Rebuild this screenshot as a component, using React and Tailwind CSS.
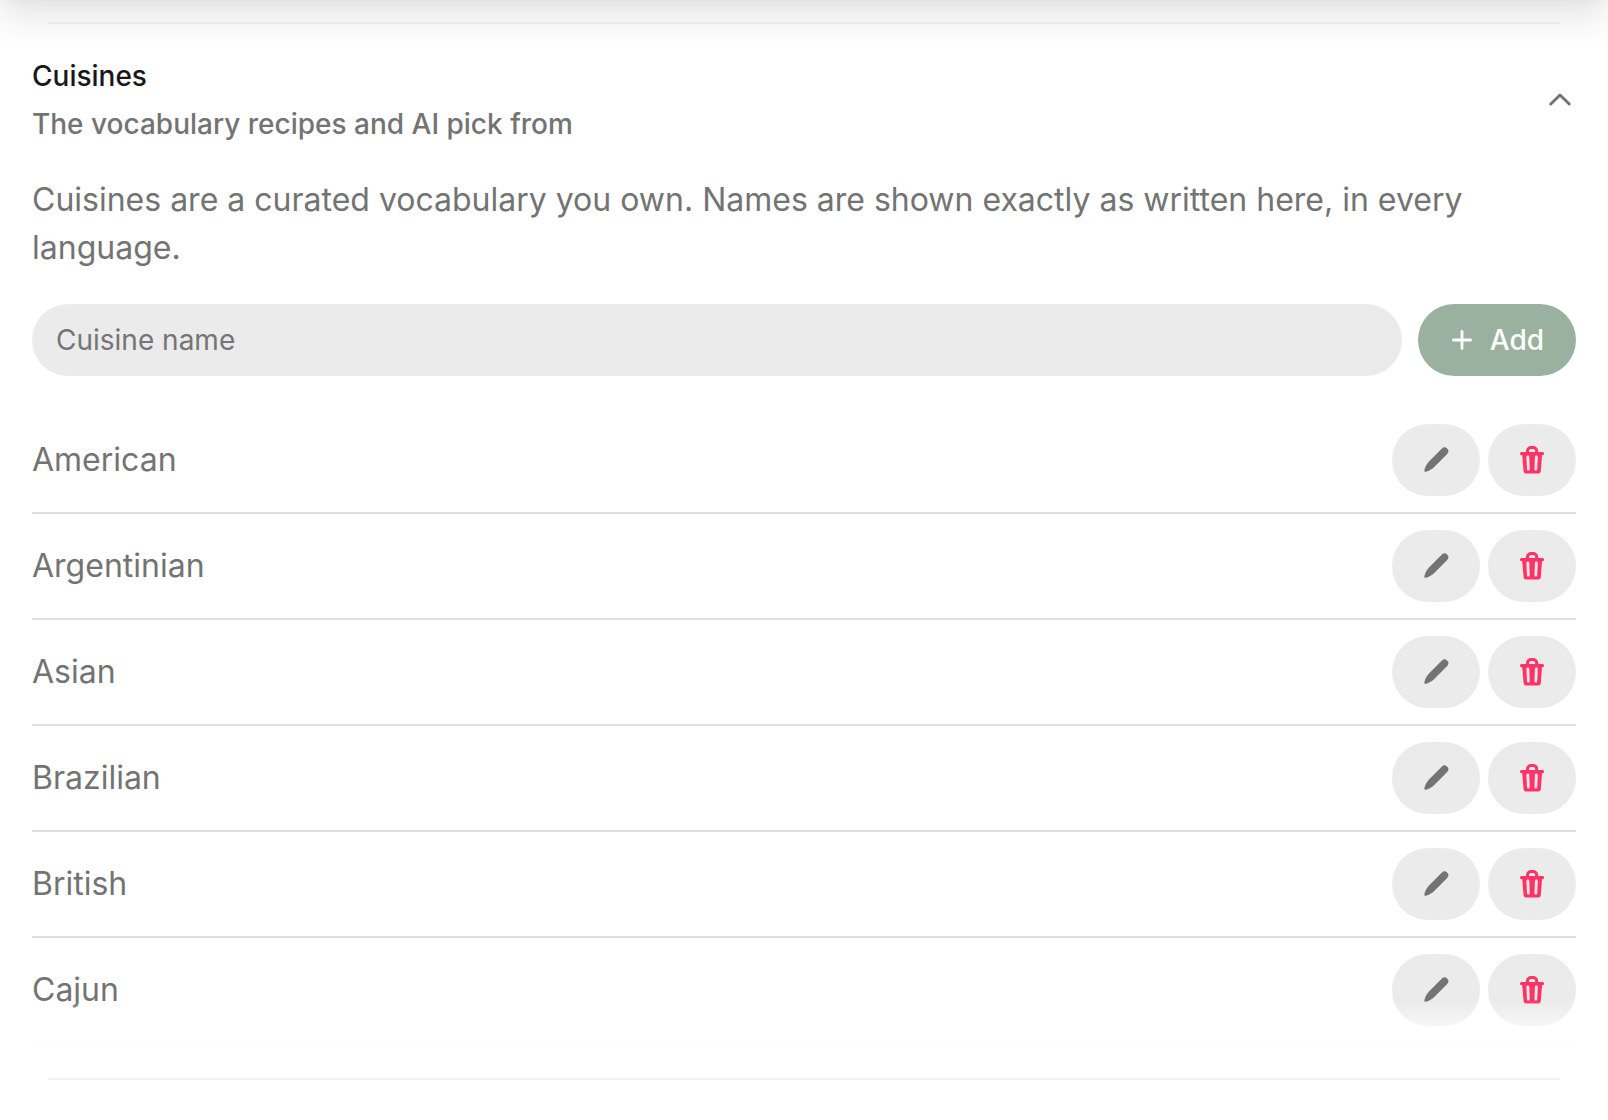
import { useState } from 'react';

const initialCuisines = ['American', 'Argentinian', 'Asian', 'Brazilian', 'British', 'Cajun'];

function ChevronUpIcon() {
  return (
    <svg width="32" height="32" viewBox="0 0 32 32" fill="none" stroke="currentColor" strokeWidth="3" strokeLinecap="round" strokeLinejoin="round" aria-hidden="true">
      <path d="M6.8 20 L16 11 L25.2 20" />
    </svg>
  );
}

function PlusIcon() {
  return (
    <svg width="24" height="24" viewBox="0 0 24 24" fill="none" stroke="currentColor" strokeWidth="2.8" strokeLinecap="round" aria-hidden="true">
      <path d="M12 3.4 V20.6 M3.4 12 H20.6" />
    </svg>
  );
}

function PencilIcon() {
  return (
    <svg width="32" height="32" viewBox="0 0 32 32" fill="currentColor" aria-hidden="true">
      <path d="M21.7 4.7 L9 17.4 C6.6 19.8 5.2 22.8 4.4 26 C4.1 27.3 4.8 28 6 27.7 C9.2 26.9 12.1 25.1 14.5 22.7 L27.2 10 A3.75 3.75 0 0 0 21.7 4.7 Z" />
    </svg>
  );
}

function TrashIcon() {
  return (
    <svg width="32" height="32" viewBox="0 0 32 32" fill="currentColor" fillRule="evenodd" aria-hidden="true">
      <path d="M10 8 V7 A5 5 0 0 1 15 2 H17.2 A5 5 0 0 1 22.2 7 V8 H26.5 A1.6 1.6 0 0 1 26.5 11.2 H26 L24.8 27.2 A2.6 2.6 0 0 1 22.2 29.6 H10.2 A2.6 2.6 0 0 1 7.6 27.2 L6.2 11.2 H5.5 A1.6 1.6 0 0 1 5.5 8 Z M13 8 H19.2 V7 A2 2 0 0 0 17.2 5 H15 A2 2 0 0 0 13 7 Z M10.4 13 L11 25.2 A1.3 1.3 0 0 0 13.7 25 L13.3 12.9 A1.45 1.45 0 0 0 10.4 13 Z M21.8 13 L21.2 25.2 A1.3 1.3 0 0 1 18.5 25 L18.9 12.9 A1.45 1.45 0 0 1 21.8 13 Z" />
    </svg>
  );
}

function CuisineRow({ name, onDelete }) {
  return (
    <li className="flex items-center justify-between border-b-2 border-[#dedede] py-4">
      <span className="text-[32px] leading-12">{name}</span>
      <div className="flex gap-2">
        <button type="button" aria-label={`Edit ${name}`} className="flex h-18 w-22 items-center justify-center rounded-full bg-[#ebebeb]">
          <PencilIcon />
        </button>
        <button type="button" aria-label={`Delete ${name}`} onClick={onDelete} className="flex h-18 w-22 items-center justify-center rounded-full bg-[#ebebeb] text-[#ff3366]">
          <TrashIcon />
        </button>
      </div>
    </li>
  );
}

export default function App() {
  const [open, setOpen] = useState(true);
  const [name, setName] = useState('');
  const [cuisines, setCuisines] = useState(initialCuisines);

  const addCuisine = (e) => {
    e.preventDefault();
    if (!name.trim()) return;
    setCuisines([...cuisines, name.trim()]);
    setName('');
  };

  return (
    <main className="relative min-h-screen overflow-hidden bg-white px-8 pt-[22px] font-['Inter',sans-serif] text-[#737373]">
      {/* shadow cast by the panel above */}
      <div className="pointer-events-none absolute inset-x-0 bottom-full h-40 shadow-[0_16px_36px_rgba(0,0,0,0.11),0_0_16px_rgba(0,0,0,0.04)]" />
      <hr className="mx-4 border-0 border-t-2 border-black/5" />

      <section>
        <h2>
          <button
            type="button"
            aria-expanded={open}
            onClick={() => setOpen(!open)}
            className="flex w-full items-center justify-between py-8 text-left text-[28px] leading-10 font-medium"
          >
            <span className="flex flex-col gap-2">
              <span className="text-[#18181b]">Cuisines</span>
              <span>The vocabulary recipes and AI pick from</span>
            </span>
            <ChevronUpIcon />
          </button>
        </h2>

        {open && (
          <div className="relative">
            <p className="text-[32px] leading-12">
              Cuisines are a curated vocabulary you own. Names are shown exactly as written here, in every language.
            </p>

            <form onSubmit={addCuisine} className="mt-8 flex gap-4">
              <input
                type="text"
                aria-label="Cuisine name"
                placeholder="Cuisine name"
                value={name}
                onChange={(e) => setName(e.target.value)}
                className="h-18 min-w-0 flex-1 rounded-full bg-[#ebebeb] px-6 text-[28px] outline-none placeholder:text-[#757575]"
              />
              <button type="submit" className="flex h-18 items-center gap-4 rounded-full bg-[#9ab1a0] px-8 text-[28px] font-medium text-white">
                <PlusIcon />
                Add
              </button>
            </form>

            <ul className="mt-8">
              {cuisines.map((c) => (
                <CuisineRow key={c} name={c} onDelete={() => setCuisines(cuisines.filter((x) => x !== c))} />
              ))}
            </ul>
            {/* fade at the end of the list */}
            <div className="pointer-events-none absolute inset-x-0 -bottom-1 h-12 bg-linear-to-b from-white/0 to-white" />
          </div>
        )}
      </section>

      <hr className="mx-4 mt-[34px] border-0 border-t-2 border-[#f0f0f0]" />
    </main>
  );
}
